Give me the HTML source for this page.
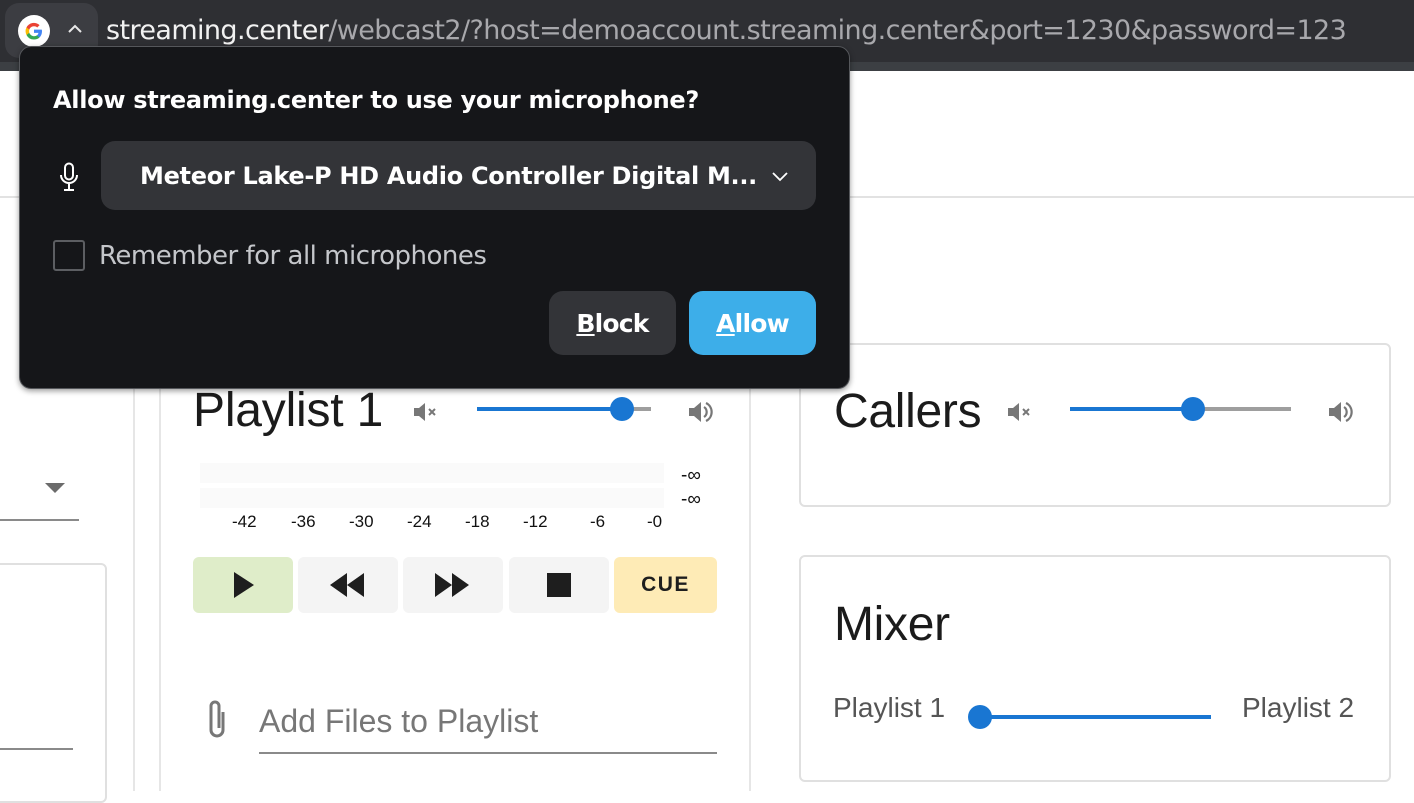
<!DOCTYPE html>
<html><head><meta charset="utf-8"><style>
*{margin:0;padding:0;box-sizing:border-box}
body{width:1414px;height:791px;overflow:hidden;background:#fff;position:relative;font-family:"Liberation Sans",sans-serif}
.a{position:absolute}
.t{font-family:"Liberation Sans",sans-serif;white-space:nowrap}
.card{position:absolute;border:2px solid #e0e0e0;border-radius:6px;background:#fff}
.btn{position:absolute;top:557px;height:56px;width:100px;border-radius:6px;background:#f4f4f4;display:flex;align-items:center;justify-content:center}
.num{position:absolute;top:512px;font-size:17px;color:#111}
</style></head><body>
<div class="a" style="left:0;top:0;width:1414px;height:62px;background:#2e2f33"></div>
<div class="a" style="left:0;top:62px;width:1414px;height:9px;background:#3c3f43"></div>
<div class="a" style="left:5px;top:3px;width:93px;height:55px;border-radius:14px;background:#3c3d42"></div>
<svg class="a" style="left:18px;top:15px" width="32" height="32" viewBox="0 0 32 32"><circle cx="16" cy="16" r="16" fill="#fff"/><path d="M24 16.3c0-.6-.1-1.2-.2-1.7H16v3.3h4.5a3.9 3.9 0 0 1-1.7 2.5v2.1h2.7c1.6-1.5 2.5-3.6 2.5-6.2z" fill="#4285f4"/><path d="M16 24.5c2.3 0 4.2-.8 5.5-2l-2.7-2.1c-.7.5-1.700.8-2.8.8-2.2 0-4-1.5-4.7-3.4H8.5v2.2a8.3 8.3 0 0 0 7.5 4.5z" fill="#34a853"/><path d="M11.3 17.8a5 5 0 0 1 0-3.2v-2.2H8.5a8.3 8.3 0 0 0 0 7.6z" fill="#fbbc05"/><path d="M16 11.3c1.2 0 2.3.4 3.2 1.2l2.4-2.4A8.3 8.3 0 0 0 8.5 12.4l2.8 2.2c.7-1.9 2.5-3.3 4.7-3.3z" fill="#ea4335"/></svg>
<svg class="a" style="left:66px;top:22px" width="18" height="14" viewBox="0 0 18 14"><path d="M3 10l6-6 6 6" stroke="#e8e8e8" stroke-width="2" fill="none"/></svg>
<div class="a t" style="left:106px;top:15px;font-size:27px;color:#f1f1f1;font-family:'DejaVu Sans',sans-serif;letter-spacing:-0.6px">streaming.center<span style="color:#a8a8ac">/webcast2/?host=demoaccount.streaming.center&amp;port=1230&amp;password=123</span></div>

<div class="a" style="left:0;top:196px;width:1414px;height:2px;background:#e2e2e2"></div>
<div class="a" style="left:133px;top:198px;width:2px;height:593px;background:#e6e6e6"></div>
<div class="a" style="left:159px;top:198px;width:2px;height:593px;background:#e6e6e6"></div>
<div class="a" style="left:749px;top:198px;width:2px;height:593px;background:#e6e6e6"></div>
<svg class="a" style="left:44px;top:482px" width="22" height="12"><path d="M1 1h20L11 11z" fill="#6b6b6b"/></svg>
<div class="a" style="left:0;top:519px;width:79px;height:2px;background:#8a8a8a"></div>
<div class="a" style="left:-10px;top:563px;width:117px;height:240px;border:2px solid #e0e0e0;border-radius:6px"></div>
<div class="a" style="left:0;top:748px;width:73px;height:2px;background:#8a8a8a"></div>

<div class="a t" style="left:193px;top:383px;font-size:48px;color:#1b1b1b;letter-spacing:-0.2px">Playlist 1</div>
<svg class="a" style="left:413px;top:401px" width="28" height="22" viewBox="0 0 28 22"><path d="M1 7h5l6-5v18l-6-5H1z" fill="#777"/><path d="M16 8l6 6M22 8l-6 6" stroke="#777" stroke-width="2"/></svg>
<div class="a" style="left:477px;top:407px;width:146px;height:4px;background:#1976d2"></div>
<div class="a" style="left:623px;top:407px;width:28px;height:4px;background:#9e9e9e"></div>
<div class="a" style="left:610px;top:397px;width:24px;height:24px;border-radius:50%;background:#1976d2"></div>
<svg class="a" style="left:687px;top:399px" width="28" height="26" viewBox="0 0 28 26"><path d="M2 9h5l7-6v20l-7-6H2z" fill="#777"/><path d="M17 8a6 6 0 0 1 0 10M19 4a10 10 0 0 1 0 18" stroke="#777" stroke-width="2.2" fill="none"/></svg>

<div class="a" style="left:200px;top:463px;width:464px;height:20px;background:#fafafa"></div>
<div class="a" style="left:200px;top:488px;width:464px;height:20px;background:#fafafa"></div>
<div class="a t" style="left:681px;top:465px;font-size:19px;color:#111">-∞</div>
<div class="a t" style="left:681px;top:489px;font-size:19px;color:#111">-∞</div>
<div class="num" style="left:232px">-42</div><div class="num" style="left:291px">-36</div><div class="num" style="left:349px">-30</div><div class="num" style="left:407px">-24</div><div class="num" style="left:465px">-18</div><div class="num" style="left:523px">-12</div><div class="num" style="left:590px">-6</div><div class="num" style="left:647px">-0</div>

<div class="btn" style="left:193px;background:#dfedc9"><svg width="24" height="26"><path d="M3 0l20 13L3 26z" fill="#1e1e1e"/></svg></div>
<div class="btn" style="left:298px"><svg width="36" height="24"><path d="M0 12l17-12v24zM17 12l17-12v24z" fill="#1e1e1e"/></svg></div>
<div class="btn" style="left:403px"><svg width="36" height="24"><path d="M0 0l17 12L0 24zM17 0l17 12-17 12z" fill="#1e1e1e"/></svg></div>
<div class="btn" style="left:509px"><div style="width:24px;height:24px;background:#1e1e1e"></div></div>
<div class="btn" style="left:614px;width:103px;background:#feebb6;font-size:21px;font-weight:bold;color:#1e1e1e;letter-spacing:1.5px">CUE</div>

<svg class="a" style="left:202px;top:698px" width="30" height="46" viewBox="0 0 30 46"><path d="M21 14v18a6 6 0 0 1-12 0V8a4 4 0 0 1 8 0v22" stroke="#777" stroke-width="3" fill="none"/></svg>
<div class="a t" style="left:259px;top:703px;font-size:32px;color:#777">Add Files to Playlist</div>
<div class="a" style="left:259px;top:752px;width:458px;height:2px;background:#8a8a8a"></div>

<div class="card" style="left:799px;top:343px;width:592px;height:164px"></div>
<div class="a t" style="left:834px;top:384px;font-size:48px;color:#1b1b1b;letter-spacing:-0.3px">Callers</div>
<svg class="a" style="left:1007px;top:401px" width="28" height="22" viewBox="0 0 28 22"><path d="M1 7h5l6-5v18l-6-5H1z" fill="#777"/><path d="M16 8l6 6M22 8l-6 6" stroke="#777" stroke-width="2"/></svg>
<div class="a" style="left:1070px;top:407px;width:123px;height:4px;background:#1976d2"></div>
<div class="a" style="left:1193px;top:407px;width:98px;height:4px;background:#9e9e9e"></div>
<div class="a" style="left:1181px;top:397px;width:24px;height:24px;border-radius:50%;background:#1976d2"></div>
<svg class="a" style="left:1327px;top:399px" width="28" height="26" viewBox="0 0 28 26"><path d="M2 9h5l7-6v20l-7-6H2z" fill="#777"/><path d="M17 8a6 6 0 0 1 0 10M19 4a10 10 0 0 1 0 18" stroke="#777" stroke-width="2.2" fill="none"/></svg>

<div class="card" style="left:799px;top:555px;width:592px;height:227px"></div>
<div class="a t" style="left:834px;top:597px;font-size:48px;color:#1b1b1b;letter-spacing:-0.3px">Mixer</div>
<div class="a t" style="left:833px;top:692px;font-size:28px;color:#555">Playlist 1</div>
<div class="a t" style="left:1242px;top:692px;font-size:28px;color:#555">Playlist 2</div>
<div class="a" style="left:980px;top:715px;width:231px;height:4px;background:#1976d2"></div>
<div class="a" style="left:968px;top:705px;width:24px;height:24px;border-radius:50%;background:#1976d2"></div>

<div class="a" style="left:19px;top:46px;width:831px;height:343px;background:#151619;border:1px solid #55575b;border-radius:12px;box-shadow:0 2px 6px rgba(0,0,0,.4)"></div>
<div class="a t" style="left:53px;top:86px;font-size:24px;font-weight:bold;color:#fff;font-family:'DejaVu Sans',sans-serif;letter-spacing:-0.3px">Allow streaming.center to use your microphone?</div>
<svg class="a" style="left:58px;top:162px" width="22" height="30" viewBox="0 0 22 30"><rect x="7" y="1.5" width="8" height="16" rx="4" stroke="#fff" stroke-width="2" fill="none"/><path d="M3 13a8 8 0 0 0 16 0M11 21v6M6 28h10" stroke="#fff" stroke-width="2" fill="none"/></svg>
<div class="a" style="left:101px;top:141px;width:715px;height:69px;background:#333438;border-radius:14px"></div>
<div class="a t" style="left:140px;top:162px;font-size:24px;font-weight:bold;color:#fff;font-family:'DejaVu Sans',sans-serif;letter-spacing:-0.3px">Meteor Lake-P HD Audio Controller Digital M...</div>
<svg class="a" style="left:771px;top:170px" width="18" height="12"><path d="M2 3l7 7 7-7" stroke="#fff" stroke-width="1.8" fill="none"/></svg>
<div class="a" style="left:53px;top:240px;width:32px;height:31px;border:2px solid #5c5e62;border-radius:3px"></div>
<div class="a t" style="left:99px;top:241px;font-size:26px;color:#c4c6ca;font-family:'DejaVu Sans',sans-serif;letter-spacing:-0.5px">Remember for all microphones</div>
<div class="a" style="left:549px;top:291px;width:127px;height:64px;background:#333438;border-radius:14px;display:flex;align-items:center;justify-content:center;font-size:25px;font-weight:bold;color:#fff;font-family:'DejaVu Sans',sans-serif;letter-spacing:-0.8px"><span><u>B</u>lock</span></div>
<div class="a" style="left:689px;top:291px;width:127px;height:64px;background:#3daee9;border-radius:14px;display:flex;align-items:center;justify-content:center;font-size:25px;font-weight:bold;color:#fff;font-family:'DejaVu Sans',sans-serif;letter-spacing:-0.8px"><span><u>A</u>llow</span></div>
</body></html>
